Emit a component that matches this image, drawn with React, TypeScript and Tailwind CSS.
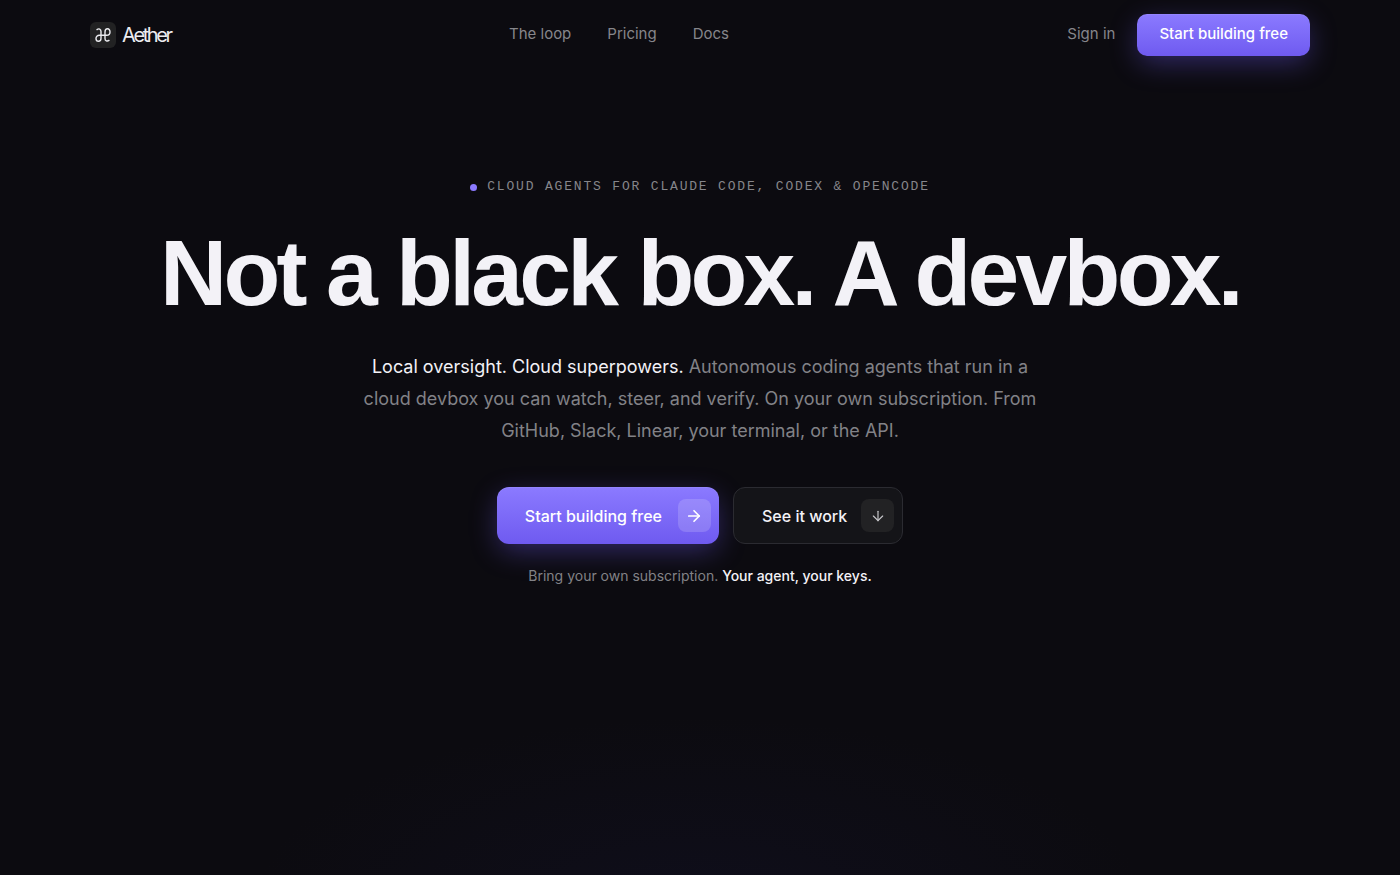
import React from 'react';
import { ArrowDown, ArrowRight } from 'lucide-react';

const NAV_LINKS = [
    { label: 'The loop', href: '#loop' },
    { label: 'Pricing', href: '#pricing' },
    { label: 'Docs', href: '#docs' },
];

const LogoMark: React.FC = () => (
    <span className="flex size-[26px] items-center justify-center rounded-md bg-[#222223]">
        <svg
            viewBox="0 0 18 18"
            className="size-[18px]"
            fill="none"
            stroke="#ececf0"
            strokeWidth="1.4"
            strokeLinecap="round"
            strokeLinejoin="round"
            aria-hidden="true"
        >
            <path d="M3 3.6C4.8 2.2 7 3 7 5.6V12.2C7 14.2 5.9 15.3 4.5 15.3S2 14.1 2 12.5 3.3 9.2 5.4 9.200H12.600C14.700 9.200 16 7.600 16 5.900S15 2.800 13.600 2.800 11 3.900 11 5.900V12.400C11 14.900 13.200 15.700 15 14.400" />
        </svg>
    </span>
);

const Header: React.FC = () => (
    <header className="w-full px-6">
        <div className="mx-auto flex h-[69px] max-w-[1220px] items-center justify-between">
            <a href="#top" className="flex items-center gap-1.5 text-xl tracking-[-0.12em] text-[#ececf0]">
                <LogoMark />
                Aether
            </a>
            <nav className="flex items-center gap-9 text-[15px] text-[#86868b]">
                {NAV_LINKS.map(({ label, href }) => (
                    <a key={label} href={href} className="hover:text-white">{label}</a>
                ))}
            </nav>
            <div className="flex items-center gap-[22px]">
                <a href="#signin" className="text-[15px] text-[#86868b] hover:text-white">Sign in</a>
                <a
                    href="#start"
                    className="flex h-[42px] items-center rounded-[10px] bg-linear-to-b from-[#8b7aff] to-[#6f5af0] px-[22px] text-[15px] font-medium text-white shadow-[0_8px_28px_-2px_rgba(111,90,240,0.4),inset_0_1px_0_rgba(255,255,255,0.08)]"
                >
                    Start building free
                </a>
            </div>
        </div>
    </header>
);

const Hero: React.FC = () => (
    <section className="flex flex-col items-center px-6 pt-[108px] text-center">
        <p className="flex items-center gap-2.5 font-['Liberation_Mono',monospace] text-[13px] leading-5 tracking-[0.14em] text-[#86868b] uppercase">
            <span className="size-[7px] rounded-full bg-[#8b7aff]" />
            Cloud agents for Claude Code, Codex &amp; OpenCode
        </p>
        <h1 className="mt-7 font-['Liberation_Sans',sans-serif] text-[93px] leading-[96px] font-bold tracking-[-0.04em] text-[#f3f2f7]">
            Not a black box. A devbox.
        </h1>
        <p className="mt-[30px] max-w-[680px] text-lg leading-8 text-[#828287]">
            <span className="text-[#f3f2f7]">Local oversight. Cloud superpowers.</span>{' '}
            Autonomous coding agents that run in a cloud devbox you can watch, steer, and verify. On your own
            subscription. From GitHub, Slack, Linear, your terminal, or the API.
        </p>
        <div className="mt-10 flex flex-wrap items-center justify-center gap-3.5">
            <a
                href="#start"
                className="flex h-[57px] items-center gap-4 rounded-xl bg-linear-to-b from-[#8b7aff] to-[#6f5af0] pr-2 pl-7 text-base font-medium text-white shadow-[0_8px_28px_-2px_rgba(111,90,240,0.4),inset_0_1px_0_rgba(255,255,255,0.08)]"
            >
                Start building free
                <span className="flex size-[33px] items-center justify-center rounded-lg bg-white/16">
                    <ArrowRight size={18} strokeWidth={2.25} />
                </span>
            </a>
            <a
                href="#demo"
                className="flex h-[57px] items-center gap-3.5 rounded-xl border border-[#2b2b31] bg-[#141418] pr-2 pl-7 text-base font-medium text-[#f3f2f7]"
            >
                See it work
                <span className="flex size-[33px] items-center justify-center rounded-lg bg-[#222224] text-[#c8c8cc]">
                    <ArrowDown size={16} strokeWidth={1.75} />
                </span>
            </a>
        </div>
        <p className="mt-[22px] text-sm leading-5 text-[#828287]">
            Bring your own subscription. <span className="font-medium text-[#f3f2f7]">Your agent, your keys.</span>
        </p>
    </section>
);

export default function App() {
    return (
        <div
            id="top"
            className="min-h-screen bg-[#0c0b10] bg-[radial-gradient(ellipse_32%_22%_at_50%_104%,#0f0e1b,transparent)] font-['Inter','Liberation_Sans',sans-serif] antialiased"
        >
            <Header />
            <main>
                <Hero />
            </main>
        </div>
    );
}
